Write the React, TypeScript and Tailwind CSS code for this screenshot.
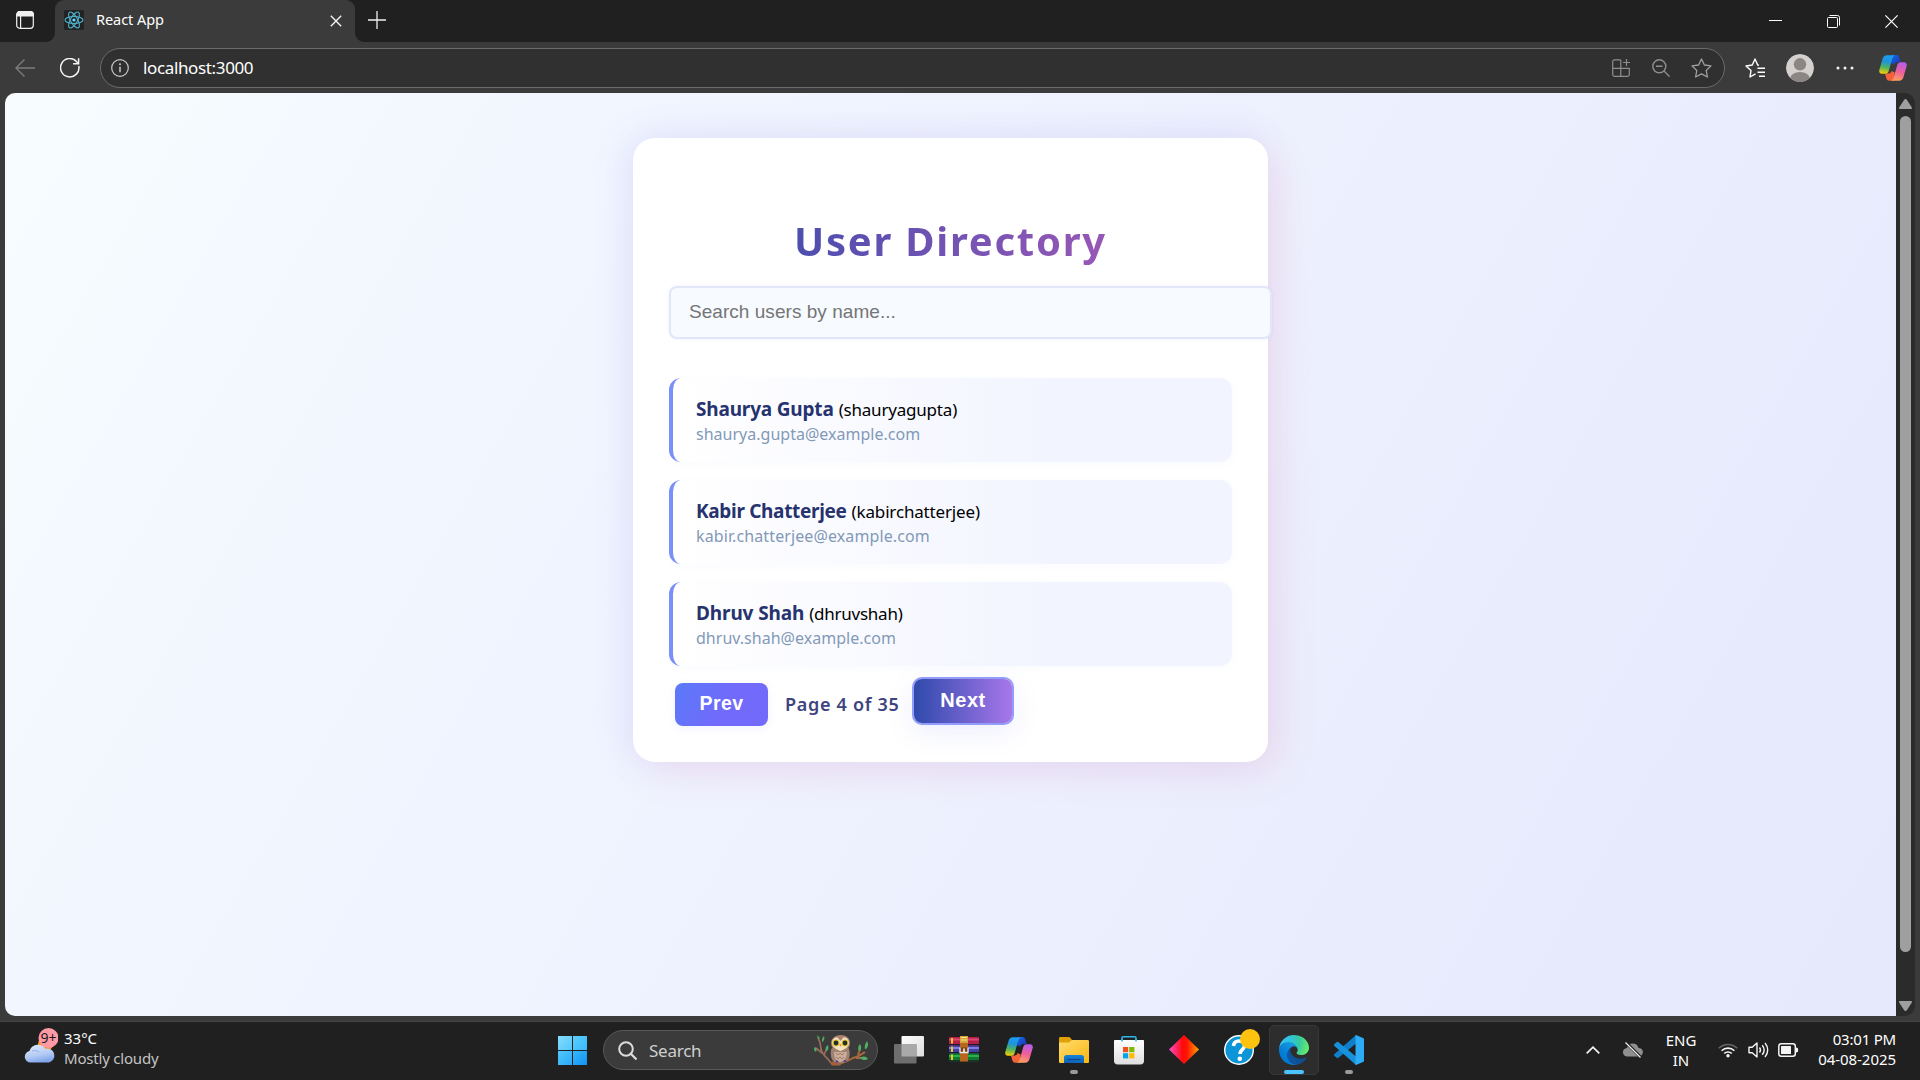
import type { ReactNode } from "react";

type User = { name: string; handle: string; email: string; nameCls: string; handleCls: string; emailCls: string };

const users: User[] = [
  { name: "Shaurya Gupta", handle: "(shauryagupta)", email: "shaurya.gupta@example.com", nameCls: "tracking-[-0.18px]", handleCls: "tracking-[-0.2px]", emailCls: "tracking-[0.01px]" },
  { name: "Kabir Chatterjee", handle: "(kabirchatterjee)", email: "kabir.chatterjee@example.com", nameCls: "tracking-[-0.32px]", handleCls: "tracking-[-0.16px]", emailCls: "tracking-[0.11px]" },
  { name: "Dhruv Shah", handle: "(dhruvshah)", email: "dhruv.shah@example.com", nameCls: "tracking-[-0.12px]", handleCls: "tracking-[-0.25px]", emailCls: "tracking-[0.02px]" },
];

function CopilotIcon({ id, className }: { id: string; className: string }) {
  return (
    <svg viewBox="0 0 28 26" className={className} fill="none">
      <defs>
        <linearGradient id={id + "a"} x1="8" y1="0" x2="5" y2="19" gradientUnits="userSpaceOnUse">
          <stop offset="0" stopColor="#1b9df5" />
          <stop offset="0.35" stopColor="#1f93d8" />
          <stop offset="0.65" stopColor="#4fb45c" />
          <stop offset="1" stopColor="#ffd000" />
        </linearGradient>
        <linearGradient id={id + "b"} x1="23" y1="7" x2="17" y2="26" gradientUnits="userSpaceOnUse">
          <stop offset="0" stopColor="#b45cf0" />
          <stop offset="0.5" stopColor="#ee5f9b" />
          <stop offset="1" stopColor="#ffa35c" />
        </linearGradient>
        <linearGradient id={id + "c"} x1="14" y1="0" x2="20" y2="7" gradientUnits="userSpaceOnUse">
          <stop offset="0" stopColor="#1565e0" />
          <stop offset="1" stopColor="#1a3fc0" />
        </linearGradient>
      </defs>
      <path d="M13 0h4.500c1.600 0 2.400 1 2.900 2.500l1.200 4.500h-3c-2 0-3 1-3.700 2.500L12 8z" fill={`url(#${id}c)`} />
      <path d="M14.500 25.700h-4.300c-1.700 0-2.400-1-2.900-2.500L6 18.600h3.600c1.600 0 2.600-1 3.100-2.500l3 1.500z" fill="#f4623a" />
      <path d="M7.800.2h8c-1.500.6-2.100 2-2.600 3.700l-3.500 12c-.5 1.800-1.500 2.800-3.300 2.800H3C.8 18.700-.2 17 .3 14.900L3.600 3.700C4.300 1.400 5.600.2 7.800.2z" fill={`url(#${id}a)`} />
      <path d="M20.200 25.700h-8c1.500-.6 2.100-2 2.600-3.700l3.500-12c.5-1.800 1.500-2.800 3.300-2.800H25c2.200 0 3.200 1.700 2.700 3.800l-3.300 11.200c-.7 2.300-2 3.500-4.200 3.500z" fill={`url(#${id}b)`} />
    </svg>
  );
}

function ReactLogo() {
  return (
    <span className="flex size-5 items-center justify-center rounded-[2px] bg-[#222222]">
      <svg viewBox="-10 -10 20 20" className="size-5" fill="none" stroke="#4fb3cf" strokeWidth="1.100">
        <ellipse rx="9" ry="3.500" />
        <ellipse rx="9" ry="3.500" transform="rotate(60)" />
        <ellipse rx="9" ry="3.500" transform="rotate(120)" />
        <circle r="1.600" fill="#61dafb" stroke="none" />
      </svg>
    </span>
  );
}

function TabStrip() {
  return (
    <div className="flex h-[42px] bg-[#202020]">
      <div className="flex w-[55px] items-center bg-[#3b3b3b]">
        <div className="flex h-full w-full items-center rounded-br-[9px] bg-[#202020] pl-[16px] pb-[2px]">
          <svg viewBox="0 0 18 18" className="size-[18px]" fill="none" stroke="#f0f0f0" strokeWidth="1.200">
            <rect x="0.700" y="0.700" width="16.600" height="16.600" rx="3" />
            <path d="M1 3.700A3 3 0 0 1 3.700.7h10.600a3 3 0 0 1 3 3V5H1z" fill="#f0f0f0" />
            <path d="M4.600 5v12.300" />
          </svg>
        </div>
      </div>
      <div className="w-[300px] bg-[#202020]">
        <div className="flex h-full items-center rounded-t-[9px] bg-[#3b3b3b] pb-[2px] pl-[9px] pr-[13px]">
          <ReactLogo />
          <span className="ml-[12px] flex-1 pb-[2px] text-[14.5px] leading-[20px] tracking-[-0.06px] text-white">React App</span>
          <svg viewBox="0 0 12 12" className="mt-[1px] size-[12px]" fill="none" stroke="#f2f2f2" strokeWidth="1.400">
            <path d="M.8.8l10.400 10.400M11.200.8L.8 11.200" />
          </svg>
        </div>
      </div>
      <div className="flex-1 bg-[#3b3b3b]">
        <div className="flex h-full items-center rounded-bl-[9px] bg-[#202020] pb-[3px]">
          <svg viewBox="0 0 18 18" className="ml-[13px] size-[18px]" fill="none" stroke="#f0f0f0" strokeWidth="1.300">
            <path d="M9 0v18M0 9h18" />
          </svg>
          <div className="ml-auto flex items-center pt-[3px]">
            <svg viewBox="0 0 13 13" className="size-[13px]" fill="none" stroke="#fff">
              <path d="M0 5.500h13" />
            </svg>
            <svg viewBox="0 0 13 13" className="ml-[45px] size-[13px]" fill="none" stroke="#fff">
              <rect x="0.500" y="2.500" width="10" height="10" rx="1" />
              <path d="M2.500.5h8a2 2 0 0 1 2 2v8" />
            </svg>
            <svg viewBox="0 0 13 13" className="ml-[45px] mr-[22px] size-[13px]" fill="none" stroke="#fff" strokeWidth="1.200">
              <path d="M.4.4l12.200 12.200M12.600.4L.4 12.600" />
            </svg>
          </div>
        </div>
      </div>
    </div>
  );
}

const starPath = "M10.500 1l2.900 6 6.600.9-4.800 4.600 1.200 6.500-5.900-3.100L4.600 19l1.200-6.500L1 7.900 7.600 7z";

function Toolbar() {
  return (
    <div className="flex h-[51px] items-center bg-[#3b3b3b]">
      <svg viewBox="0 0 20 18" className="ml-[15px] h-[18px] w-[20px]" fill="none" stroke="#7d7d7d" strokeWidth="1.300">
        <path d="M20 9H.9M9.500.5L.9 9l8.600 8.500" />
      </svg>
      <svg viewBox="0 0 20 20" className="ml-[25px] size-[20px]" fill="none" stroke="#f5f5f5" strokeWidth="1.500">
        <path d="M18.800 8A9.200 9.200 0 1 1 16.700 3.700L18.600 5.700" />
        <path d="M18.600.3v5.500h-5.500" />
      </svg>
      <div className="ml-[20px] flex h-[40px] w-[1625px] items-center rounded-full border border-[#6b6b6b] bg-[#303030]">
        <svg viewBox="0 0 18 18" className="ml-[10px] size-[18px]" fill="none" stroke="#c9c9c9" strokeWidth="1.200">
          <circle cx="9" cy="9" r="8.300" />
          <path d="M9 7.800v5.400" strokeWidth="1.500" />
          <circle cx="9" cy="5.300" r="1" fill="#c9c9c9" stroke="none" />
        </svg>
        <span className="ml-[14px] text-[17px] leading-[24px] tracking-[-0.36px] text-white">localhost:3000</span>
        <div className="ml-auto mr-[13px] flex items-center">
          <svg viewBox="0 0 18 18" className="size-[18px]" fill="none" stroke="#8e8e8e" strokeWidth="1.200">
            <path d="M8.600.8H2.500A1.800 1.800 0 0 0 .7 2.600v13a1.800 1.800 0 0 0 1.800 1.800h13a1.800 1.800 0 0 0 1.800-1.800V9.300H.7M8.800.8v16.500M14.500 0v7M11 3.500h7" />
          </svg>
          <svg viewBox="0 0 18 18" className="ml-[22px] size-[18px]" fill="none" stroke="#8e8e8e" strokeWidth="1.400">
            <circle cx="7.300" cy="7.300" r="6.500" />
            <path d="M4 7.300h6.600M12 12l5.600 5.600" />
          </svg>
          <svg viewBox="0 0 21 20" className="ml-[21px] mr-[-1px] h-[20px] w-[21px]" fill="none" stroke="#a0a0a0" strokeWidth="1.300" strokeLinejoin="round">
            <path d={starPath} />
          </svg>
        </div>
      </div>
      <svg viewBox="0 0 21 20" className="ml-[20px] h-[20px] w-[21px]" fill="none" stroke="#fff" strokeWidth="1.400" strokeLinejoin="round">
        <path d="M10.500 15.800L5 19l1-6.500L1 8l6.300-1 2.700-6 2.700 6 1.300.3" />
        <path d="M12.500 10.200H20M12.500 14.200H20M14 18.200h6" />
      </svg>
      <svg viewBox="0 0 28 28" className="ml-[20px] size-[28px] rounded-full">
        <circle cx="14" cy="14" r="14" fill="#d3d0cd" />
        <circle cx="14" cy="10.300" r="6.200" fill="#8b8683" />
        <ellipse cx="14" cy="25" rx="10" ry="7" fill="#8b8683" />
      </svg>
      <svg viewBox="0 0 18 4" className="ml-[22px] h-[4px] w-[18px]" fill="#f5f5f5">
        <circle cx="2" cy="2" r="1.500" />
        <circle cx="9" cy="2" r="1.500" />
        <circle cx="16" cy="2" r="1.500" />
      </svg>
      <CopilotIcon id="tb" className="ml-[25px] h-[26px] w-[28px]" />
    </div>
  );
}

function UserCard({ user }: { user: User }) {
  return (
    <li className="h-[84px] rounded-[12px] border-l-4 border-[#7b8ff8] bg-[linear-gradient(90deg,#ffffff_0%,#f7f8ff_45%,#f2f5ff_68%)] pl-[23px] pt-[19px] shadow-[0_2px_10px_rgba(110,130,240,0.03)]">
      <div className="flex h-[25px] items-baseline leading-[25px]">
        <span className={"text-[19px] font-bold text-[#26336f] " + user.nameCls}>{user.name}</span>
        <span className={"ml-[5px] text-[17px] text-black " + user.handleCls}>{user.handle}</span>
      </div>
      <div className={"h-[24px] text-[16px] leading-[24px] text-[#8299b8] " + user.emailCls}>{user.email}</div>
    </li>
  );
}

function Directory() {
  return (
    <div className="mx-auto mt-[45px] h-[624px] w-[635px] rounded-[22px] bg-white px-[36px] pt-[76px] shadow-[-8px_-4px_36px_rgba(100,125,255,0.11),12px_10px_40px_rgba(255,90,130,0.12)]">
      <h1 className="bg-[linear-gradient(90deg,#2f4aac,#b55cb9)] bg-clip-text text-center text-[40px] font-bold leading-[54px] tracking-[1.75px] text-transparent">
        User Directory
      </h1>
      <input
        placeholder="Search users by name..."
        className="mt-[18px] block h-[53px] w-[603px] max-w-none rounded-[8px] border-2 border-[#e1e7f9] bg-[#f7faff] px-[18px] pb-[1px] font-['Liberation_Sans',sans-serif] text-[19px] tracking-[0.04px] shadow-[0_0_3px_rgba(110,130,240,0.12)] outline-none placeholder:text-[#757575]"
      />
      <ul className="mt-[39px] flex flex-col gap-[18px]">
        {users.map((u) => (
          <UserCard key={u.email} user={u} />
        ))}
      </ul>
      <div className="mt-[13px] flex items-start pl-[6px]">
        <button className="mt-[4px] h-[43px] w-[93px] rounded-[8px] bg-[linear-gradient(120deg,#5a7af9_0%,#726afb_55%)] pb-[2px] font-['Liberation_Sans',sans-serif] text-[19.5px] font-bold tracking-[0.4px] text-white shadow-[0_2px_8px_rgba(110,130,240,0.10)]">
          Prev
        </button>
        <span className="ml-[17px] mt-[13px] w-[115px] whitespace-nowrap text-[18px] font-semibold leading-[24px] tracking-[0.7px] text-[#3d4480]">
          Page 4 of 35
        </span>
        <button className="ml-[14px] h-[44px] w-[98px] rounded-[8px] bg-[linear-gradient(90deg,#2f4aac,#a777ea)] pb-[3px] font-['Liberation_Sans',sans-serif] text-[20px] font-bold tracking-[0.5px] text-white shadow-[0_0_0_2px_#929dfb,0_8px_28px_rgba(110,130,240,0.14)]">
          Next
        </button>
      </div>
    </div>
  );
}

function Viewport() {
  return (
    <div className="flex h-[928px] bg-[#3b3b3b] pb-[5px] pl-[5px] pr-[5px]">
      <main className="flex-1 overflow-hidden rounded-l-[10px] bg-[linear-gradient(120deg,#f7fcff_0%,#f1f6ff_27%,#ecf0fe_60%,#e7eafc_85%,#e5e9fb_100%)]">
        <div className="flex">
          <Directory />
        </div>
      </main>
      <div className="flex w-[19px] flex-col items-center rounded-r-[10px] bg-[#2b2b2b] pb-[5px] pt-[6px]">
        <svg viewBox="0 0 13 10" className="h-[10px] w-[13px]" fill="#9f9f9f">
          <path d="M6.500 0c.6 0 1 .3 1.300.8l4.900 7.400c.6.900.2 1.800-.9 1.800H1.200C.1 10-.3 9.100.3 8.200L5.200.8C5.500.3 5.900 0 6.500 0z" />
        </svg>
        <div className="mt-[7px] h-[836px] w-[11px] rounded-full bg-[#9f9f9f]" />
        <svg viewBox="0 0 13 10" className="mt-auto h-[10px] w-[13px] rotate-180" fill="#9f9f9f">
          <path d="M6.500 0c.6 0 1 .3 1.300.8l4.900 7.400c.6.900.2 1.800-.9 1.800H1.200C.1 10-.3 9.100.3 8.200L5.200.8C5.500.3 5.900 0 6.500 0z" />
        </svg>
      </div>
    </div>
  );
}

function Slot({ children, mark }: { children: ReactNode; mark?: "idle" | "active" }) {
  return (
    <div className="flex h-[58px] w-[55px] flex-col items-center pt-[3px]">
      <div className={mark === "active" ? "flex h-[50px] w-[50px] flex-col items-center rounded-[5px] border border-[#383838] bg-[#2d2d2d] pt-[9px]" : "flex h-[50px] w-[50px] flex-col items-center pt-[10px]"}>
        <div className="h-[30px] w-[30px]">{children}</div>
        {mark === "active" && <div className="mt-[5px] h-[4px] w-[20px] rounded-full bg-[#4cc2ff]" />}
        {mark === "idle" && <div className="mt-[5px] h-[4px] w-[8px] rounded-full bg-[#9a9a9a]" />}
      </div>
    </div>
  );
}

function Owl() {
  return (
    <svg viewBox="0 0 55 32" className="h-[32px] w-[55px]" fill="none">
      <path d="M17 29C13 23 8 21 7 15c-.4-4-1-8-3-11M8 19l-6-5M10 21l3-7" stroke="#9a6b5a" strokeWidth="1.700" />
      <path d="M17 30c7-2 15-1 22-6 5-1 9-4 12-6M42 24l8 0M44 21l2-6" stroke="#a8683f" strokeWidth="2" />
      <path d="M16 28c6-1.500 13-.5 20-4l-1 3c-4 2.500-7 2-9 4.500h-8z" fill="#a5623a" />
      <path d="M4 5l-1-4 3 3zM8 7c0-3 1-4 2-5 1 3 0 5-2 6zM1 17c-2-1-1-3 0-4 2 1 2 3 1 5zM12 17c-1-3 0-5 2-6 1 3 0 5-1 6zM45 17c-2-3 0-6 1-7 2 3 1 6 0 7zM51 15c-1-4 1-6 2-8 2 3 1 6-1 8zM46 24c3-2 6-2 8 1-3 2-6 1-8-1z" fill="#4fae62" />
      <path d="M17 16c-1 7 1 12 6 13h6c6-2 8-7 6-14-1-4-17-4-18 1z" fill="#a08272" />
      <path d="M20 18c0 6 2 9 6 10 4-1 7-4 7-10z" fill="#c9ad98" />
      <path d="M22 19l2 2 2-2 2 2 2-2M22 23l2 2 2-2 2 2 2-2" stroke="#967565" strokeWidth="0.800" />
      <path d="M17 9c0-4 4-8 9.500-8S36 4 36 9c0 5-4 8-9.500 8S17 14 17 9z" fill="#a98570" />
      <path d="M18 9c0-4 3-6 5.500-5.500L26.500 7l3-3.500C32 3 35 5 35 9s-4 6-8.500 8C22 15 18 13 18 9z" fill="#f3e3c3" />
      <circle cx="22" cy="9" r="3.600" fill="#e8c530" />
      <circle cx="31" cy="9" r="3.600" fill="#e8c530" />
      <circle cx="22" cy="9" r="2.400" fill="#22302c" />
      <circle cx="31" cy="9" r="2.400" fill="#22302c" />
      <path d="M25.400 10h2.200l-1.100 3.500z" fill="#e39a2e" />
      <path d="M21 28.500l2-2.500 2 2.500zM29 28l2-2.500 2 2.500z" fill="#5a3a9a" />
    </svg>
  );
}

function Taskbar() {
  return (
    <div className="flex h-[59px] border-t border-[#444444] bg-[#202020]">
      <div className="flex w-[558px] pl-[24px] pt-[5px]">
        <svg viewBox="0 0 34 37" className="h-[37px] w-[34px]" fill="none">
          <defs>
            <linearGradient id="cl" x1="10" y1="16" x2="14" y2="36" gradientUnits="userSpaceOnUse">
              <stop offset="0" stopColor="#e3ecfb" />
              <stop offset="0.600" stopColor="#b6ccf5" />
              <stop offset="1" stopColor="#7fa4ea" />
            </linearGradient>
          </defs>
          <circle cx="21.500" cy="17" r="7.500" fill="#f7941d" />
          <path d="M6.500 35.500a5.800 5.800 0 0 1-1-11.500 9 9 0 0 1 16-2.300A7 7 0 1 1 25 35.500z" fill="url(#cl)" />
          <path d="M8 24a7 7 0 0 1 7 1" stroke="#8fb0ef" strokeWidth="1" />
          <circle cx="24.500" cy="11" r="10" fill="#ff99a4" />
          <text x="24.500" y="16" textAnchor="middle" fontSize="14" fill="#1b1b1b" fontFamily="Noto Sans">9+</text>
        </svg>
        <div className="ml-[6px] mt-[1px] text-[15px] leading-[20px]">
          <div className="text-white">33°C</div>
          <div className="tracking-[-0.2px] text-[#c4c4c4]">Mostly cloudy</div>
        </div>
      </div>
      <div className="mt-[14px] grid h-[29px] w-[29px] grid-cols-2 gap-[1px]">
        <div className="bg-[linear-gradient(135deg,#86dbfd,#52c8fb)]" />
        <div className="bg-[linear-gradient(135deg,#5cd0fd,#38b8fa)]" />
        <div className="bg-[linear-gradient(135deg,#52c8fb,#2aa9f8)]" />
        <div className="bg-[linear-gradient(135deg,#38b8fa,#1093f5)]" />
      </div>
      <div className="ml-[16px] mt-[8px] flex h-[40px] w-[275px] items-center rounded-full border border-[#585858] bg-[#3b3b3b]">
        <svg viewBox="0 0 19 19" className="ml-[14px] size-[19px]" fill="none" stroke="#dcdcdc" strokeWidth="2">
          <circle cx="8" cy="8" r="6.800" />
          <path d="M12.800 12.800l5 5" strokeLinecap="round" strokeWidth="2.300" />
        </svg>
        <span className="ml-[12px] mt-[1px] text-[17px] leading-[24px] tracking-[-0.25px] text-[#cfcfcf]">Search</span>
        <span className="ml-auto mr-[8px]"><Owl /></span>
      </div>
      <div className="ml-[3px] flex">
        <Slot>
          <svg viewBox="0 0 30 30" className="size-[30px]">
            <defs>
              <linearGradient id="tv" x1="0" y1="0" x2="1" y2="1"><stop offset="0" stopColor="#fff" /><stop offset="1" stopColor="#dcdcdc" /></linearGradient>
            </defs>
            <rect x="7.500" y="1" width="22.500" height="20.500" rx="1" fill="url(#tv)" />
            <rect x="0" y="9" width="22.500" height="19.500" rx="1" fill="#6e6e6e" />
            <rect x="7.500" y="9" width="15" height="12.500" fill="#a9a9a9" />
          </svg>
        </Slot>
        <Slot>
          <svg viewBox="0 0 30 30" className="size-[30px]">
            <rect y="2" width="30" height="8.500" rx="1" fill="#b51f48" /><rect y="3.500" width="30" height="2" fill="#e04a70" />
            <rect y="10.500" width="30" height="8" rx="1" fill="#4540a5" /><rect y="12" width="30" height="2" fill="#7f7be0" />
            <rect y="18.500" width="30" height="8" rx="1" fill="#0f7a2c" /><rect y="20" width="30" height="2" fill="#2fae50" />
            <path d="M0 9.500h30M0 17.500h30M0 25.800h30" stroke="#1c1c2c" strokeWidth="1.200" />
            <path d="M3 3v5.500M3 11.500V17M3 19.500V25" stroke="#f0c52c" strokeWidth="2" />
            <rect x="11" y="1" width="8" height="25.500" fill="#b8651e" />
            <rect x="11" y="1" width="8" height="7" fill="#d5a63a" />
            <path d="M12 2.500h6M12 5h6" stroke="#f6de83" strokeWidth="1" />
            <path d="M11 12.500v5h8v-5" fill="#7a4212" stroke="#eaeaea" strokeWidth="1.300" />
            <path d="M15 13.500v3.500" stroke="#fff" strokeWidth="1.500" />
          </svg>
        </Slot>
        <Slot><CopilotIcon id="tk" className="mx-[1px] mt-[2px] h-[26px] w-[28px]" /></Slot>
        <Slot mark="idle">
          <svg viewBox="0 0 30 30" className="size-[30px]">
            <defs>
              <linearGradient id="fo" x1="0" y1="0" x2="1" y2="1"><stop offset="0" stopColor="#ffdd6e" /><stop offset="1" stopColor="#fdb713" /></linearGradient>
              <linearGradient id="fb" x1="0" y1="0" x2="0" y2="1"><stop offset="0" stopColor="#1683dc" /><stop offset="1" stopColor="#0b63b5" /></linearGradient>
            </defs>
            <path d="M0 3.500C0 2.500.6 2 1.500 2h8c.8 0 1.300.3 1.800.8L13 5v4H0z" fill="#e0a008" />
            <path d="M0 7.500h10L13 5h15.500c1 0 1.500.5 1.500 1.500v20c0 1-.5 1.500-1.500 1.500h-27C.5 28 0 27.500 0 26.500z" fill="url(#fo)" />
            <path d="M5 28v-5.500c0-1.500.8-2.500 2.500-2.500h15c1.700 0 2.500 1 2.500 2.500V28z" fill="url(#fb)" />
            <path d="M8.500 24.500h13" stroke="#0a4a8c" strokeWidth="1.200" />
          </svg>
        </Slot>
        <Slot>
          <svg viewBox="0 0 30 30" className="size-[30px]">
            <defs>
              <linearGradient id="st" x1="0" y1="0" x2="0" y2="1"><stop offset="0" stopColor="#fff" /><stop offset="1" stopColor="#dedede" /></linearGradient>
            </defs>
            <path d="M8 7V3c0-.8.500-1.300 1.300-1.300h11.400c.8 0 1.300.5 1.300 1.300v4" fill="none" stroke="#2fb5e8" strokeWidth="1.600" />
            <path d="M0 5.500C0 5.200.3 5 .7 5h28.600c.4 0 .7.200.7.500V26c0 2-1.500 3.500-3.500 3.500h-23C1.500 29.500 0 28 0 26z" fill="url(#st)" />
            <path d="M8 6.500V4M22 6.500V4" stroke="#2fb5e8" strokeWidth="1.600" />
            <rect x="9" y="12" width="5.200" height="5.200" fill="#f25022" />
            <rect x="15.200" y="12" width="5.200" height="5.200" fill="#7fba00" />
            <rect x="9" y="18.200" width="5.200" height="5.200" fill="#00a4ef" />
            <rect x="15.200" y="18.200" width="5.200" height="5.200" fill="#ffb900" />
          </svg>
        </Slot>
        <Slot>
          <svg viewBox="0 0 30 30" className="size-[30px]">
            <defs>
              <linearGradient id="di" x1="0" y1="0" x2="1" y2="0"><stop offset="0" stopColor="#ff4fd0" /><stop offset="0.450" stopColor="#ff0a0a" /><stop offset="0.600" stopColor="#ff1500" /><stop offset="1" stopColor="#ffa600" /></linearGradient>
            </defs>
            <path d="M15 0l15 14.500L15 29 0 14.500z" fill="url(#di)" />
          </svg>
        </Slot>
        <Slot>
          <svg viewBox="0 0 30 30" className="size-[30px] overflow-visible">
            <circle cx="15" cy="15" r="14.300" fill="#0c96d8" stroke="#fff" strokeWidth="1.400" />
            <path d="M9.500 11c.3-3.500 2.500-5 5.500-5 3.500 0 5.500 2 5.500 4.700 0 4-4.500 4-4.500 8.300" fill="none" stroke="#fff" strokeWidth="3.600" />
            <circle cx="15.800" cy="23.800" r="2.300" fill="#fff" />
            <circle cx="26" cy="4" r="10" fill="#ffc20e" />
          </svg>
        </Slot>
        <Slot mark="active">
          <svg viewBox="0 0 256 256" className="size-[30px]">
            <defs>
              <linearGradient id="e1" x1="63" y1="177" x2="241" y2="177" gradientUnits="userSpaceOnUse"><stop offset="0" stopColor="#0c59a4" /><stop offset="1" stopColor="#114a8b" /></linearGradient>
              <linearGradient id="e2" x1="157" y1="100" x2="46" y2="221" gradientUnits="userSpaceOnUse"><stop offset="0" stopColor="#1b9de2" /><stop offset="0.160" stopColor="#1595df" /><stop offset="0.670" stopColor="#0680d7" /><stop offset="1" stopColor="#0078d4" /></linearGradient>
              <radialGradient id="e3" cx="26" cy="50" r="230" gradientUnits="userSpaceOnUse"><stop offset="0" stopColor="#35c1f1" /><stop offset="0.300" stopColor="#2fc3df" /><stop offset="0.650" stopColor="#36c9a0" /><stop offset="1" stopColor="#66eb6e" /></radialGradient>
            </defs>
            <path d="M231 190.500c-3.400 1.800-6.900 3.300-10.500 4.700a101 101 0 0 1-36 6.500c-47.300 0-88.500-32.500-88.500-74.300a31.500 31.500 0 0 1 16.400-27.300c-42.800 1.800-53.800 46.400-53.800 72.500 0 73.900 68 81.400 82.700 81.400 7.900 0 19.800-2.300 27-4.600l1.300-.4a128 128 0 0 0 66.600-52.800 4 4 0 0 0-5.200-5.700z" fill="url(#e1)" />
            <path d="M105.700 241.400a79 79 0 0 1-22.700-21.300 80.700 80.700 0 0 1 29.500-120c3.200-1.500 8.500-4.200 15.600-4a32.400 32.400 0 0 1 25.700 13 32 32 0 0 1 6.300 18.700c0-.2 24.500-79.600-80-79.600-43.900 0-80 41.600-80 78.200a130 130 0 0 0 12.100 56 128 128 0 0 0 156.400 67 75.500 75.500 0 0 1-62.800-8z" fill="url(#e2)" />
            <path d="M152.300 148.900c-.8 1-3.300 2.500-3.300 5.700 0 2.600 1.700 5.100 4.700 7.200 14.400 10 41.500 8.700 41.600 8.700a59.600 59.600 0 0 0 30.300-8.300 61.400 61.400 0 0 0 30.400-52.900c.3-22.400-8-37.300-11.300-43.900C223.500 23.900 177.700 0 128 0A128 128 0 0 0 0 126.200c.5-36.500 36.800-66 80-66 3.500 0 23.500.3 42 10a72.600 72.600 0 0 1 30.900 29.300c6.100 10.600 7.200 24.100 7.200 29.500 0 5.400-2.700 13.300-7.800 19.900z" fill="url(#e3)" />
          </svg>
        </Slot>
        <Slot mark="idle">
          <svg viewBox="0 0 30 30" className="size-[30px]">
            <path d="M22 0v8.500L4.500 22.800c-.6.500-1.300.5-1.900 0L.5 21c-.7-.6-.7-1.400 0-2z" fill="#0f7fc9" />
            <path d="M22 30v-8.500L4.500 7.200c-.6-.5-1.300-.5-1.900 0L.5 9c-.7.600-.7 1.400 0 2z" fill="#1791dc" />
            <path d="M22 0l7 3c.7.300 1 .8 1 1.500v21c0 .7-.3 1.200-1 1.500l-7 3c-.8-.5-.5-1-.5-2V2c0-1-.3-1.500.5-2z" fill="#2bacf5" />
          </svg>
        </Slot>
      </div>
      <div className="ml-auto flex text-[15px] leading-[20px] text-white">
        <svg viewBox="0 0 14 8" className="mt-[24px] h-[8px] w-[14px]" fill="none" stroke="#f5f5f5" strokeWidth="1.700">
          <path d="M.7 7.300L7 1.200l6.300 6.100" />
        </svg>
        <svg viewBox="0 0 20 16" className="ml-[23px] mt-[20px] h-[16px] w-[20px]" fill="none">
          <path d="M4.500 14.500a4.300 4.300 0 0 1-.5-8.600A6 6 0 0 1 15.500 5.900a4.300 4.300 0 0 1 .2 8.600z" fill="#8f8f8f" />
          <path d="M3.500 1l14.500 14.500" stroke="#202020" strokeWidth="3" />
          <path d="M2.500.5L17.500 15.500" stroke="#ededed" strokeWidth="1.300" />
        </svg>
        <div className="ml-[22px] mt-[8px] w-[32px] text-center">
          <div>ENG</div>
          <div>IN</div>
        </div>
        <svg viewBox="0 0 20 16" className="ml-[21px] mt-[20px] h-[16px] w-[20px]" fill="none" strokeWidth="1.600">
          <path d="M.8 6.300a13 13 0 0 1 18.400 0" stroke="#666666" />
          <path d="M3.600 8.800a9 9 0 0 1 12.800 0M6.200 11.500a5.400 5.400 0 0 1 7.600 0" stroke="#f5f5f5" />
          <circle cx="10" cy="13.700" r="1.700" fill="#f5f5f5" />
        </svg>
        <svg viewBox="0 0 21 18" className="ml-[10px] mt-[19px] h-[18px] w-[21px]" fill="none" stroke="#f5f5f5" strokeWidth="1.400">
          <path d="M1 6.300h3.200L9 2v14l-4.800-4.300H1z" strokeLinejoin="round" />
          <path d="M11.500 6.500c1.200 1.500 1.200 3.500 0 5M14.200 4.200c2.500 3 2.500 6.600 0 9.600M17 2c3.600 4.200 3.600 9.800 0 14" />
        </svg>
        <svg viewBox="0 0 21 14" className="ml-[9px] mt-[21px] h-[14px] w-[21px]" fill="none">
          <rect x="0.800" y="0.800" width="16.500" height="12.400" rx="2.500" stroke="#f5f5f5" strokeWidth="1.500" />
          <rect x="3" y="3" width="10" height="8" rx="0.500" fill="#f5f5f5" />
          <path d="M18 4.500c1.600 0 2.200.8 2.200 2.500s-.6 2.500-2.200 2.500z" fill="#f5f5f5" />
        </svg>
        <div className="mr-[24px] mt-[7px] w-[97px] text-right">
          <div className="tracking-[-0.2px]">03:01 PM</div>
          <div className="tracking-[-0.05px]">04-08-2025</div>
        </div>
      </div>
    </div>
  );
}

export default function App() {
  return (
    <div className="flex h-[1080px] w-[1920px] flex-col overflow-hidden font-['Noto_Sans',sans-serif]">
      <TabStrip />
      <Toolbar />
      <Viewport />
      <Taskbar />
    </div>
  );
}
